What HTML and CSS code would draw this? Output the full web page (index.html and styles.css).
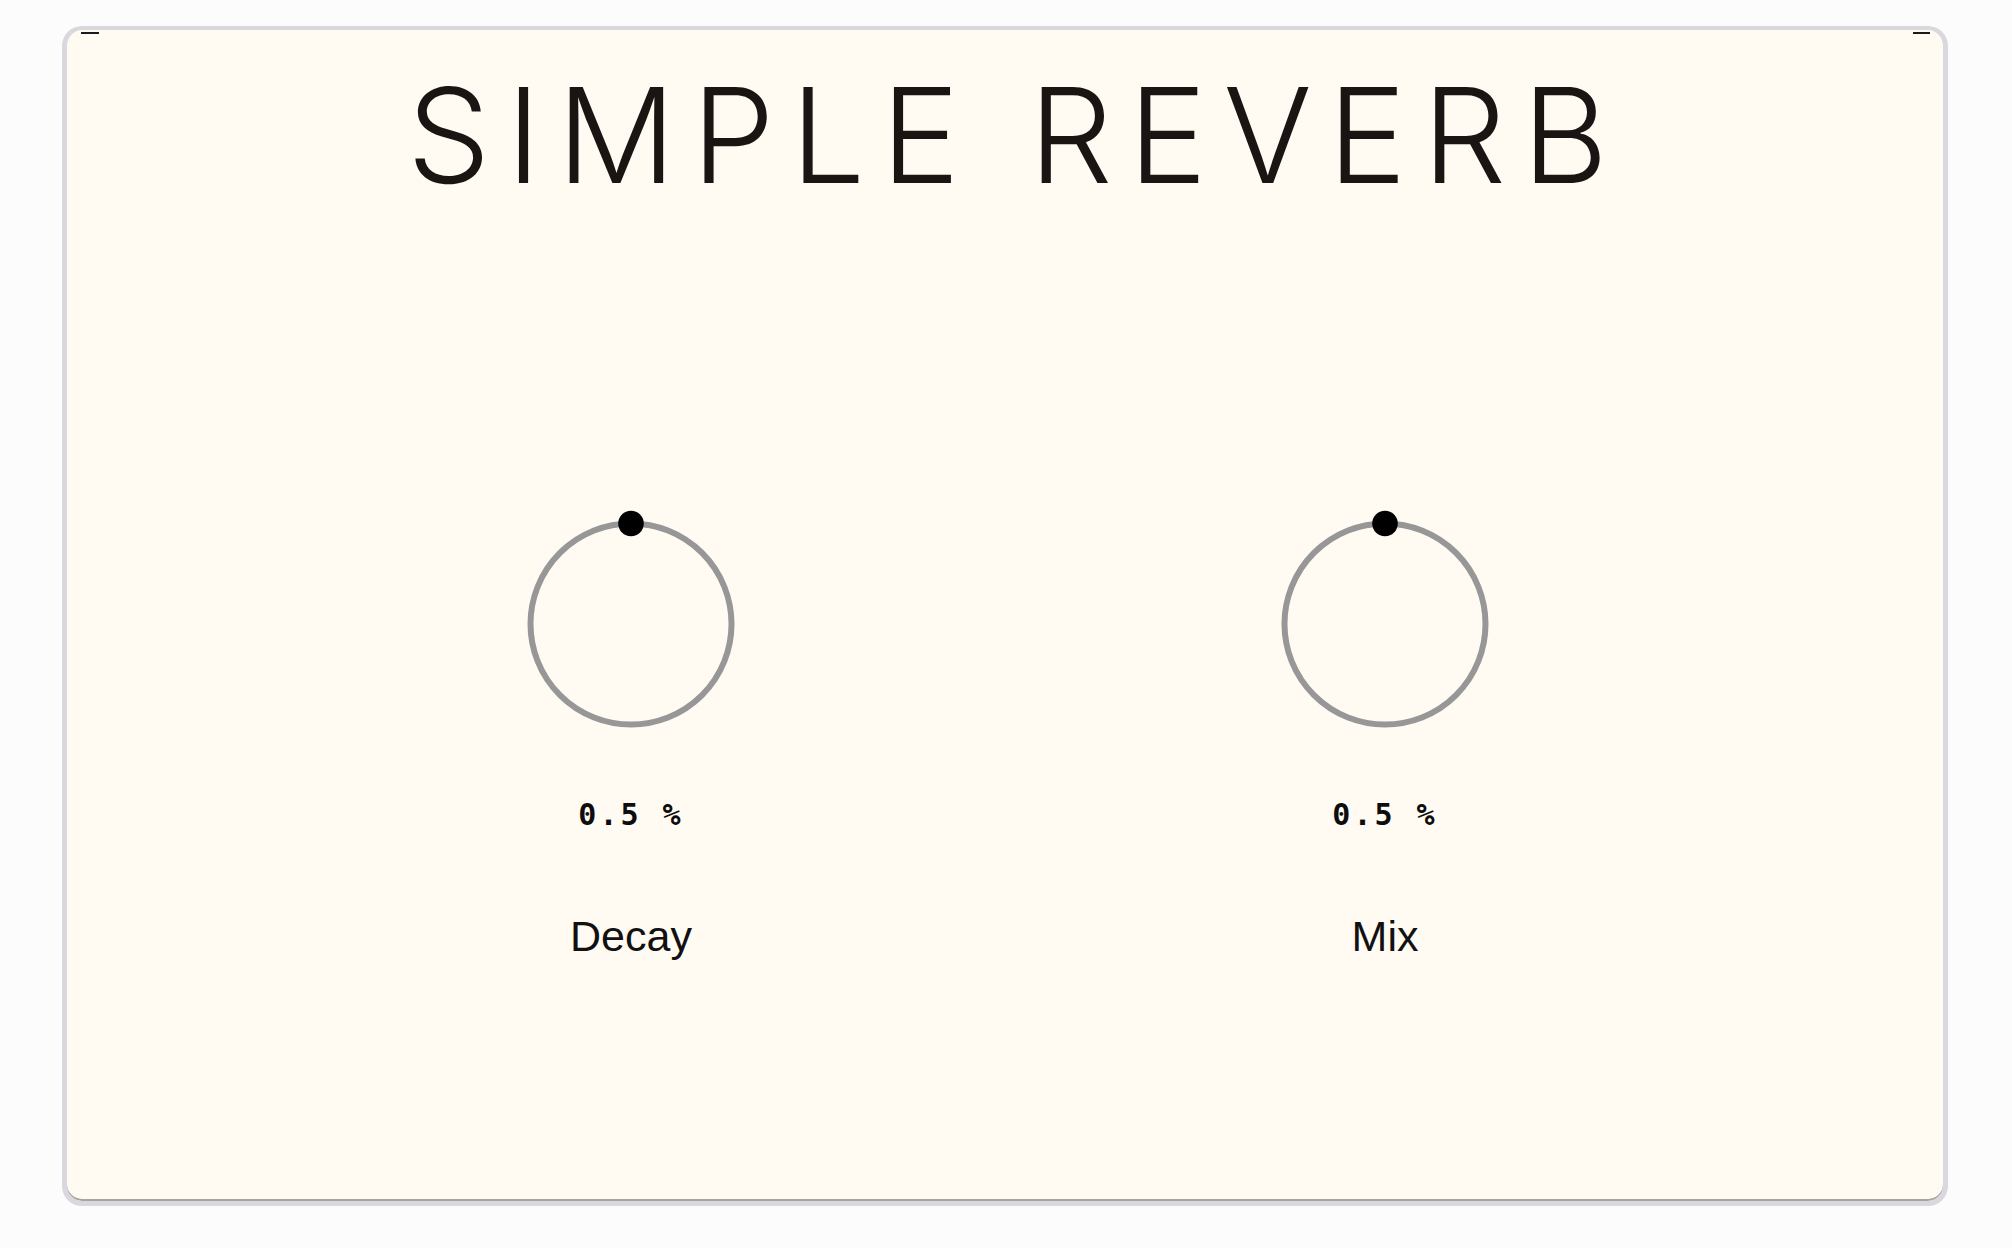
FILE: index.html
```html
<!DOCTYPE html>
<html lang="en">
<head>
<meta charset="utf-8">
<title>Simple Reverb</title>
<link rel="stylesheet" href="styles.css">
</head>
<body>
<main class="panel">
  <h1 class="title">SIMPLE REVERB</h1>
  <section class="knobs">
    <div class="knob">
      <svg class="dial" width="232" height="232" viewBox="0 0 232 232">
        <circle cx="116" cy="116" r="100.5" fill="none" stroke="#979797" stroke-width="6"/>
        <circle cx="116" cy="15.5" r="12.8" fill="#000"/>
      </svg>
      <div class="value">0.5 %</div>
      <div class="label">Decay</div>
    </div>
    <div class="knob">
      <svg class="dial" width="232" height="232" viewBox="0 0 232 232">
        <circle cx="116" cy="116" r="100.5" fill="none" stroke="#979797" stroke-width="6"/>
        <circle cx="116" cy="15.5" r="12.8" fill="#000"/>
      </svg>
      <div class="value">0.5 %</div>
      <div class="label">Mix</div>
    </div>
  </section>
</main>
</body>
</html>
```
FILE: styles.css
```css
html, body {
  margin: 0;
  padding: 0;
}
body {
  background: #fcfcfc;
  width: 2012px;
  height: 1248px;
  overflow: hidden;
}
.panel {
  position: relative;
  box-sizing: border-box;
  margin: 26px 0 0 62px;
  width: 1886px;
  height: 1180px;
  border-style: solid;
  border-color: #d9d8de;
  border-width: 4px 5px 5px 5px;
  border-radius: 20px;
  background: #fffbf3;
  box-shadow: inset 0 -2px 0 #a9a49c;
  display: flex;
  flex-direction: column;
  align-items: center;
}
.panel::before,
.panel::after {
  content: "";
  position: absolute;
  top: 2px;
  height: 2px;
  background: #1b1b1b;
}
.panel::before {
  left: 14px;
  width: 18px;
}
.panel::after {
  right: 13px;
  width: 17px;
}
.title {
  margin: 39px 0 0 0;
  padding-left: 21px;
  font-family: Inter, "Helvetica Neue", "Liberation Sans", sans-serif;
  font-weight: 300;
  font-size: 132px;
  line-height: 132px;
  letter-spacing: 16px;
  color: #1a1512;
  text-align: center;
  white-space: nowrap;
}
.knobs {
  margin-top: 307px;
  padding-left: 6px;
  display: flex;
  justify-content: center;
  gap: 494px;
}
.knob {
  width: 260px;
  display: flex;
  flex-direction: column;
  align-items: center;
}
.dial {
  display: block;
}
.value {
  margin-top: 57px;
  font-family: "DejaVu Sans Mono", "Liberation Mono", monospace;
  font-weight: bold;
  font-size: 30px;
  line-height: 36px;
  letter-spacing: 3px;
  color: #0d0d0d;
  white-space: nowrap;
}
.label {
  margin-top: 79px;
  font-family: "Liberation Sans", Arial, sans-serif;
  font-size: 43px;
  line-height: 48px;
  color: #111;
}
```
